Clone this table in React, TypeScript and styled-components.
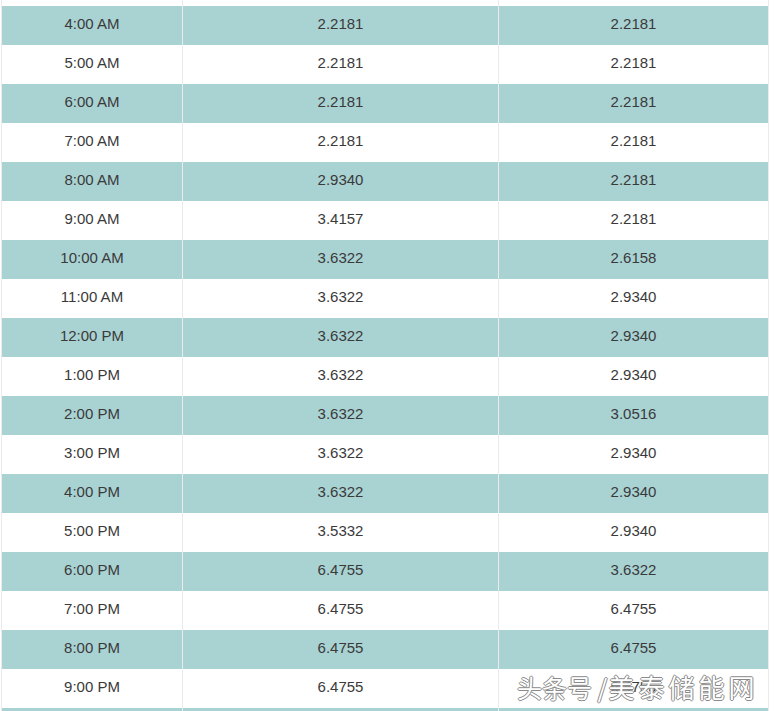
import styled, { createGlobalStyle } from "styled-components"

const GlobalStyle = createGlobalStyle`
  html, body {
    margin: 0;
    padding: 0;
    background: #ffffff;
  }
  body {
    font-family: "Liberation Sans", Arial, sans-serif;
    overflow: hidden;
  }
`

// first and last rows are only edges of the scrolled table, their text is out of view
const rows: [string, string, string][] = [
  ["", "", ""],
  ["4:00 AM", "2.2181", "2.2181"],
  ["5:00 AM", "2.2181", "2.2181"],
  ["6:00 AM", "2.2181", "2.2181"],
  ["7:00 AM", "2.2181", "2.2181"],
  ["8:00 AM", "2.9340", "2.2181"],
  ["9:00 AM", "3.4157", "2.2181"],
  ["10:00 AM", "3.6322", "2.6158"],
  ["11:00 AM", "3.6322", "2.9340"],
  ["12:00 PM", "3.6322", "2.9340"],
  ["1:00 PM", "3.6322", "2.9340"],
  ["2:00 PM", "3.6322", "3.0516"],
  ["3:00 PM", "3.6322", "2.9340"],
  ["4:00 PM", "3.6322", "2.9340"],
  ["5:00 PM", "3.5332", "2.9340"],
  ["6:00 PM", "6.4755", "3.6322"],
  ["7:00 PM", "6.4755", "6.4755"],
  ["8:00 PM", "6.4755", "6.4755"],
  ["9:00 PM", "6.4755", "6.4755"],
  ["", "", ""],
]

const App = () => {
  return (
    <Page>
      <GlobalStyle />
      <Table>
        {rows.map((r, i) => (
          <Row key={i} $teal={i % 2 === 1} $first={i === 0}>
            <Cell>{r[0]}</Cell>
            <Cell>{r[1]}</Cell>
            <Cell>{r[2]}</Cell>
          </Row>
        ))}
      </Table>
      <Watermark>
        头条号 /<Wide>美泰储能网</Wide>
      </Watermark>
    </Page>
  )
}

const Page = styled.div`
  position: relative;
  width: 775px;
  height: 711px;
  overflow: hidden;
  background: #fff;
`

const Table = styled.div`
  width: 768px;
  margin-left: 1px;
  display: flex;
  flex-direction: column;
`

const Row = styled.div<{ $teal: boolean; $first: boolean }>`
  display: grid;
  grid-template-columns: 181px 316px 271px;
  height: 39px;
  margin-top: ${(p) => (p.$first ? "-33.5px" : "0")};
  background: ${(p) => (p.$teal ? "#a9d2d3" : "#ffffff")};
  color: #3a3a3a;
  font-size: 15px;
`

const Cell = styled.div`
  display: flex;
  align-items: center;
  justify-content: center;
  border-left: 1px solid #ebebeb;
  padding-bottom: 4px;
  box-sizing: border-box;

  &:last-child {
    border-right: 1px solid #ebebeb;
  }
`

const Watermark = styled.div`
  position: absolute;
  left: 517px;
  top: 669px;
  font-family: "Noto Sans CJK SC", sans-serif;
  font-size: 25px;
  line-height: 36px;
  color: #ffffff;
  text-shadow:
    1px 0 0 #8a8a8a,
    -1px 0 0 #8a8a8a,
    0 1px 0 #8a8a8a,
    0 -1px 0 #8a8a8a;
  white-space: nowrap;
`

const Wide = styled.span`
  margin-left: 1px;
  letter-spacing: 4px;
  font-size: 26px;
`

export default App
